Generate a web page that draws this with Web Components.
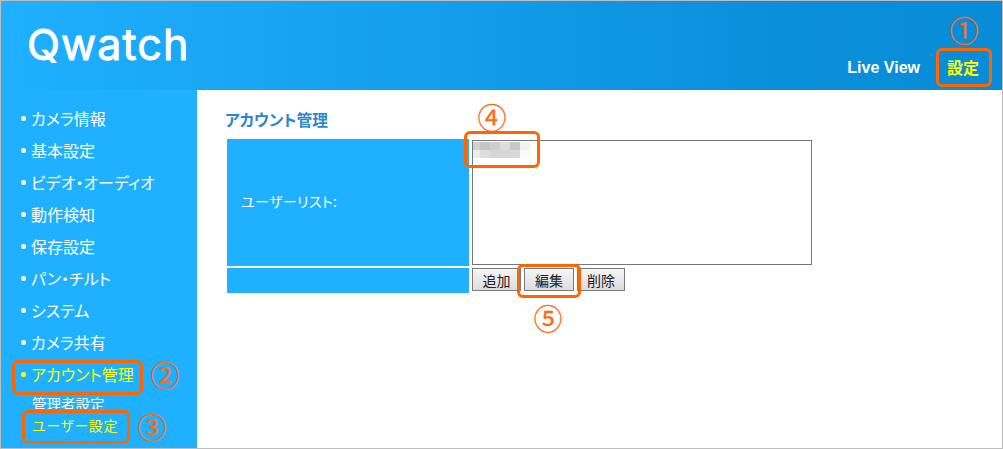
<!DOCTYPE html>
<html lang="ja">
<head>
<meta charset="utf-8">
<title>Qwatch</title>
<style>
  html, body { margin: 0; padding: 0; background: #fff; }
  body { font-family: "Noto Sans CJK JP", "Liberation Sans", sans-serif; }
</style>
</head>
<body>
<qw-app>
  <qw-header slot="header"></qw-header>
  <qw-sidebar slot="sidebar">
    <qw-nav-item>カメラ情報</qw-nav-item>
    <qw-nav-item>基本設定</qw-nav-item>
    <qw-nav-item>ビデオ・オーディオ</qw-nav-item>
    <qw-nav-item>動作検知</qw-nav-item>
    <qw-nav-item>保存設定</qw-nav-item>
    <qw-nav-item>パン・チルト</qw-nav-item>
    <qw-nav-item>システム</qw-nav-item>
    <qw-nav-item>カメラ共有</qw-nav-item>
    <qw-nav-item active>アカウント管理</qw-nav-item>
    <qw-sub-item clipped>管理者設定</qw-sub-item>
    <qw-sub-item active>ユーザー設定</qw-sub-item>
  </qw-sidebar>
  <qw-user-panel slot="main"></qw-user-panel>

  <qw-callout slot="overlay" num="①" box="936,48,56,39" mark="949,15"></qw-callout>
  <qw-callout slot="overlay" num="②" box="12,360,131,35" mark="150,360"></qw-callout>
  <qw-callout slot="overlay" num="③" box="22,410,108,34" mark="137,412"></qw-callout>
  <qw-callout slot="overlay" num="④" box="464,131,76,37" mark="477,102"></qw-callout>
  <qw-callout slot="overlay" num="⑤" box="517,264,64,34" mark="533,303"></qw-callout>
</qw-app>

<script>
const sharedFont = `"Noto Sans CJK JP", "Liberation Sans", sans-serif`;

class QwApp extends HTMLElement {
  constructor() {
    super();
    this.attachShadow({mode: 'open'});
    this.shadowRoot.innerHTML = `
      <style>
        :host {
          display: grid;
          grid-template-columns: 196px 1fr;
          grid-template-rows: 89px 1fr;
          position: relative;
          box-sizing: border-box;
          width: 1003px;
          height: 449px;
          border: 1px solid #bdbdbd;
          overflow: hidden;
          font-family: ${sharedFont};
        }
        .header { grid-column: 1 / 3; display: block; }
      </style>
      <slot name="header" class="header"></slot>
      <slot name="sidebar"></slot>
      <slot name="main"></slot>
      <slot name="overlay"></slot>
    `;
  }
}

class QwHeader extends HTMLElement {
  constructor() {
    super();
    this.attachShadow({mode: 'open'});
    this.shadowRoot.innerHTML = `
      <style>
        :host {
          display: flex;
          justify-content: space-between;
          height: 89px;
          background: linear-gradient(90deg, #1fb0ff 0%, #0b90dc 75%, #088cd8 100%);
          color: #fff;
        }
        .logo {
          margin: 15px 0 0 26px;
          font: 400 43px/56px "Inter", sans-serif;
          letter-spacing: 1.1px;
          -webkit-text-stroke: 0.9px #fff;
        }
        nav {
          display: flex;
          align-items: center;
          height: 30px;
          margin-top: 52px;
          padding-right: 23px;
        }
        .live { font: 700 16px "Liberation Sans", sans-serif; margin-right: 27px; }
        .current { font: 700 16px/20px ${sharedFont}; color: #ffff00; margin-bottom: 2px; }
      </style>
      <div class="logo">Qwatch</div>
      <nav>
        <span class="live">Live View</span>
        <span class="current">設定</span>
      </nav>
    `;
  }
}

class QwSidebar extends HTMLElement {
  constructor() {
    super();
    this.attachShadow({mode: 'open'});
    this.shadowRoot.innerHTML = `
      <style>
        :host {
          display: flex;
          flex-direction: column;
          background: #1fb0ff;
          padding-top: 12px;
          height: 100%;
          box-sizing: border-box;
        }
      </style>
      <slot></slot>
    `;
  }
}

class QwNavItem extends HTMLElement {
  constructor() {
    super();
    this.attachShadow({mode: 'open'});
    this.shadowRoot.innerHTML = `
      <style>
        :host {
          display: flex;
          align-items: center;
          height: 32px;
          padding-left: 20px;
          color: #fff;
          font-size: 16px;
          font-feature-settings: "palt";
          white-space: nowrap;
        }
        :host([active]) { color: #ffff00; }
        i {
          width: 5px;
          height: 5px;
          margin: 1px 5px 0 0;
          border-radius: 50%;
          background: currentColor;
        }
      </style>
      <i></i><slot></slot>
    `;
  }
}

class QwSubItem extends HTMLElement {
  constructor() {
    super();
    this.attachShadow({mode: 'open'});
    this.shadowRoot.innerHTML = `
      <style>
        :host {
          display: block;
          box-sizing: border-box;
          height: 23px;
          padding-left: 31px;
          color: #fff;
          font-size: 14.5px;
          line-height: 23px;
          font-feature-settings: "palt";
          white-space: nowrap;
        }
        :host([active]) { color: #ffff00; margin-top: 5px; font-size: 14px; letter-spacing: 0.6px; }
        /* bottom of this row is cut off by the next callout in the original */
        :host([clipped]) { height: 19px; padding-top: 2px; overflow: hidden; }
      </style>
      <slot></slot>
    `;
  }
}

class QwButton extends HTMLElement {
  constructor() {
    super();
    this.attachShadow({mode: 'open'});
    this.shadowRoot.innerHTML = `
      <style>
        :host {
          display: flex;
          align-items: center;
          justify-content: center;
          box-sizing: border-box;
          height: 23px;
          border: 1px solid #7a7a7a;
          background: linear-gradient(#f6f6f6, #dcdcdc);
          color: #222;
          font-size: 14px;
        }
      </style>
      <slot></slot>
    `;
  }
}

class QwUserPanel extends HTMLElement {
  constructor() {
    super();
    this.attachShadow({mode: 'open'});
    const blurred = [
      ['#d0d0d0', '#c4c4c4', '#cfcfcf', '#dcdcdc', '#c8c8c8', '#f2f2f2'],
      ['#ececec', '#dcdcdc', '#d6d6d6', '#d6d6d6', '#d8d8d8', '#fafafa']
    ].flat().map(c => `<b style="background:${c}"></b>`).join('');
    this.shadowRoot.innerHTML = `
      <style>
        :host {
          display: block;
          padding: 19px 0 0 28px;
          background: #fff;
        }
        h2 {
          margin: 0 0 8px;
          height: 22px;
          font: 700 15.7px/22px ${sharedFont};
          font-feature-settings: "palt";
          color: #2c87c9;
        }
        .table {
          display: grid;
          grid-template-columns: 242px 340px;
          grid-template-rows: 127px 25px;
          column-gap: 3px;
          row-gap: 2px;
          margin-left: 2px;
        }
        .label {
          display: flex;
          align-items: center;
          padding: 0 0 4px 14px;
          background: #1fb0ff;
          color: #fff;
          font-size: 14px;
          font-feature-settings: "palt";
          letter-spacing: 0.4px;
        }
        .blank { background: #1fb0ff; }
        .list {
          box-sizing: border-box;
          margin-top: 1px;
          height: 125px;
          border: 1px solid #777;
          background: #fff;
          padding: 1px 0 0 0;
        }
        .blur {
          display: grid;
          grid-template-columns: 7px repeat(5, 10px);
          grid-auto-rows: 8px;
          width: 57px;
        }
        .actions { display: flex; gap: 3px; align-items: flex-start; padding-top: 0; }
        qw-button:nth-child(1) { width: 49px; }
        qw-button:nth-child(2) { width: 50px; }
        qw-button:nth-child(3) { width: 48px; }
      </style>
      <h2>アカウント管理</h2>
      <div class="table">
        <div class="label">ユーザーリスト:</div>
        <div class="list"><div class="blur">${blurred}</div></div>
        <div class="blank"></div>
        <div class="actions">
          <qw-button>追加</qw-button>
          <qw-button>編集</qw-button>
          <qw-button>削除</qw-button>
        </div>
      </div>
    `;
  }
}

// annotation drawn on top of the screenshot: a rounded frame plus a circled number
class QwCallout extends HTMLElement {
  constructor() {
    super();
    this.attachShadow({mode: 'open'});
  }

  connectedCallback() {
    const [x, y, w, h] = this.getAttribute('box').split(',').map(Number);
    const [mx, my] = this.getAttribute('mark').split(',').map(Number);
    this.shadowRoot.innerHTML = `
      <style>
        :host { display: contents; }
        .frame {
          position: absolute;
          left: ${x - 1}px;
          top: ${y - 1}px;
          width: ${w}px;
          height: ${h}px;
          box-sizing: border-box;
          border: 3px solid #ff6600;
          border-radius: 6px;
        }
        .mark {
          position: absolute;
          left: ${mx - 1}px;
          top: ${my - 1}px;
          width: 30px;
          height: 28px;
          font: 400 29px/28px ${sharedFont};
          -webkit-text-stroke: 0.3px #ff6a13;
          color: #ff6a13;
          text-align: center;
        }
      </style>
      <div class="frame"></div>
      <div class="mark">${this.getAttribute('num')}</div>
    `;
  }
}

customElements.define('qw-button', QwButton);
customElements.define('qw-nav-item', QwNavItem);
customElements.define('qw-sub-item', QwSubItem);
customElements.define('qw-sidebar', QwSidebar);
customElements.define('qw-header', QwHeader);
customElements.define('qw-user-panel', QwUserPanel);
customElements.define('qw-callout', QwCallout);
customElements.define('qw-app', QwApp);
</script>
</body>
</html>
